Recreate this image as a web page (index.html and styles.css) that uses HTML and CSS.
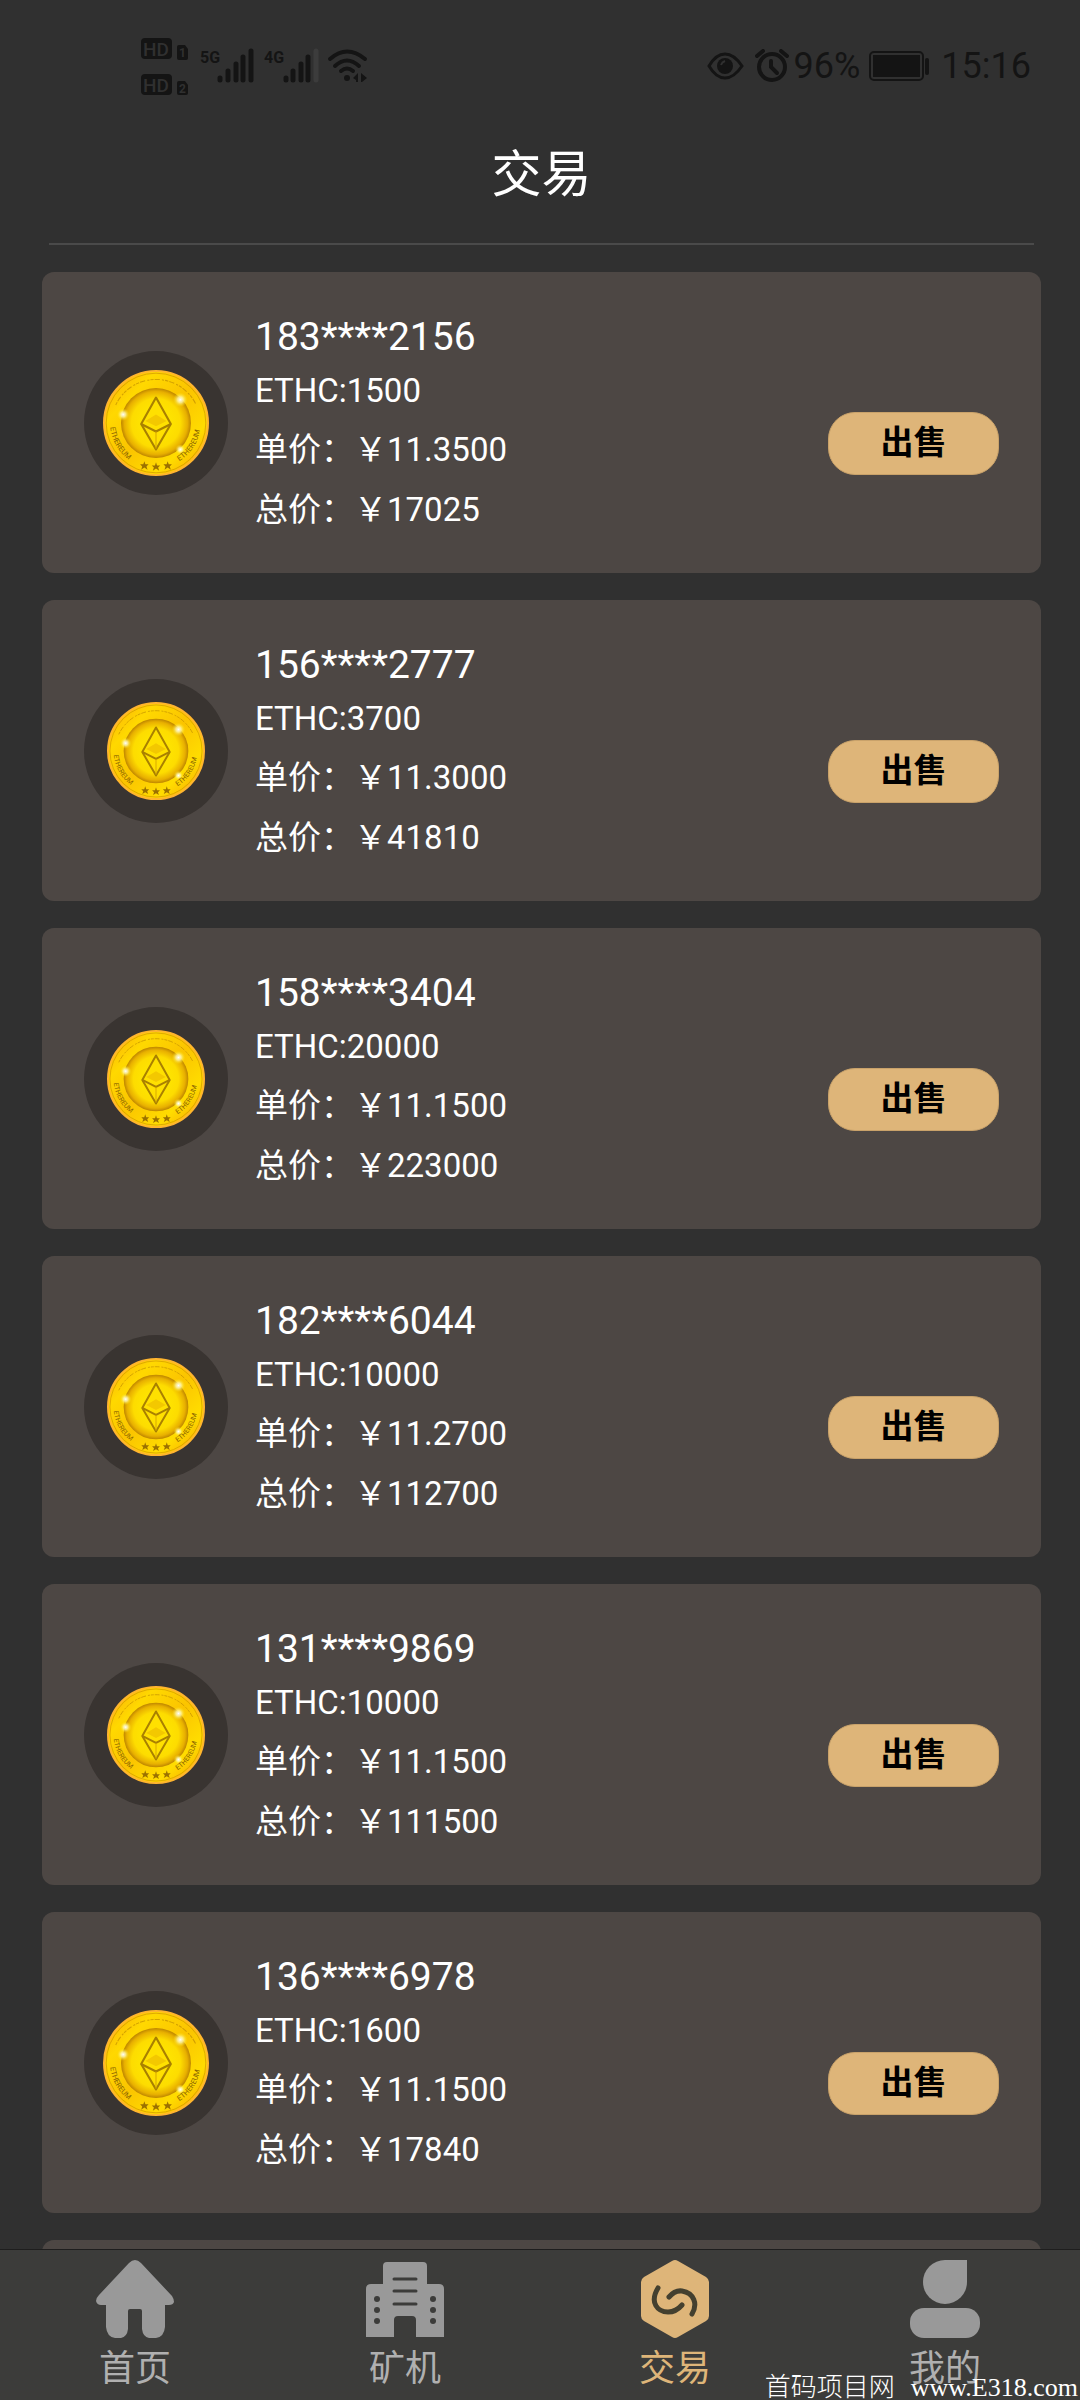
FILE: index.html
```
<!DOCTYPE html>
<html lang="zh-CN">
<head>
  <meta charset="UTF-8" />
  <meta name="viewport" content="width=device-width, initial-scale=1.0" />
  <title>交易</title>
  <link rel="stylesheet" href="styles.css">
</head>
<body>
  <!-- Shared gradients and paths for the coins -->
  <svg class="defs" width="0" height="0" aria-hidden="true">
    <defs>
      <linearGradient id="rim" x1="0" y1="0" x2="1" y2="1">
        <stop offset="0" stop-color="#f9a80a" />
        <stop offset="0.25" stop-color="#ffd800" />
        <stop offset="0.5" stop-color="#fbc400" />
        <stop offset="0.75" stop-color="#ffdc00" />
        <stop offset="1" stop-color="#f59c00" />
      </linearGradient>
      <radialGradient id="face" cx="0.5" cy="0.5" r="0.5">
        <stop offset="0" stop-color="#ffee00" />
        <stop offset="0.7" stop-color="#fddc00" />
        <stop offset="0.9" stop-color="#e8b000" />
        <stop offset="1" stop-color="#bd8500" />
      </radialGradient>
      <radialGradient id="glint">
        <stop offset="0" stop-color="#fff" />
        <stop offset="0.4" stop-color="#fff7a8" stop-opacity="0.8" />
        <stop offset="1" stop-color="#ffe400" stop-opacity="0" />
      </radialGradient>
      <path id="arc-left" d="M7 54A43 43 0 0 0 40 92" />
      <path id="arc-right" d="M72 86A43 43 0 0 0 92 46" />
      <path id="star" d="M50 88L51 91H54L52 93L53 96L50 94L47 96L48 93L46 91H49Z" />
    </defs>
  </svg>
  <template id="coin">
    <svg class="coin" viewBox="0 0 100 100" aria-hidden="true">
      <circle cx="50" cy="50" r="49" fill="url(#rim)" stroke="#ffb52e" stroke-width="2" />
      <circle cx="50" cy="50" r="47" fill="none" stroke="#c98b00" stroke-width="0.6" />
      <path d="M12 33A42 42 0 0 1 88 33" fill="none" stroke="#b58200" stroke-width="1" stroke-dasharray="3 1 5 2 2 1" opacity="0.6" />
      <circle cx="50" cy="50" r="33" fill="url(#face)" />
      <path d="M50 26L64 51L50 75L36 51Z" fill="#ffe000" stroke="#a98000" stroke-width="2" stroke-linejoin="round" />
      <path d="M50 42L60 48L50 53L40 48Z" fill="#f3c800" />
      <path d="M36 51L50 58L64 51" fill="none" stroke="#a98000" stroke-width="2" />
      <path d="M50 58V74" stroke="#d9a900" stroke-width="1" />
      <circle cx="19" cy="42" r="6" fill="url(#glint)" />
      <circle cx="73" cy="28" r="7" fill="url(#glint)" />
      <circle cx="73" cy="75" r="5" fill="url(#glint)" />
      <text class="coin-text"><textPath href="#arc-left">ETHEREUM</textPath></text>
      <text class="coin-text"><textPath href="#arc-right">ETHEREUM</textPath></text>
      <g fill="#9b7100">
        <use href="#star" y="-1" />
        <use href="#star" x="-11" y="-2" />
        <use href="#star" x="11" y="-2" />
      </g>
    </svg>
  </template>

  <div class="status">
    <svg width="232" height="60" viewBox="138 35 232 60" fill="#141414" aria-hidden="true">
      <rect x="141" y="37" width="31" height="21" rx="4" />
      <rect x="141" y="73" width="31" height="21" rx="4" />
      <text class="hd" x="143" y="55">HD</text>
      <text class="hd" x="143" y="91">HD</text>
      <path d="M179 44H185L188 48V57Q188 59 186 59H179Q177 59 177 57V46Q177 44 179 44Z" />
      <path d="M179 80H185L188 84V92Q188 94 186 94H179Q177 94 177 92V82Q177 80 179 80Z" />
      <text class="sim" x="179" y="56">1</text>
      <text class="sim" x="179" y="92">2</text>
      <text class="net" x="200" y="62">5G</text>
      <text class="net" x="264" y="62">4G</text>
      <g stroke="#141414" stroke-width="5" stroke-linecap="round">
        <path d="M220 77V79M228 70V79M236 63V79M243 56V79M251 50V79" />
        <path d="M286 77V79M293 70V79M301 63V79M308 56V79" />
        <path d="M316 50V79" stroke="#3c3c3c" />
      </g>
      <g fill="none" stroke="#141414" stroke-width="4" stroke-linecap="round">
        <path d="M330 58Q347 43 365 58M335 65Q347 54 359 65M341 70Q347 65 353 70" />
      </g>
      <circle cx="347" cy="77" r="3" />
      <path d="M358 72V81H356V79L353 77L358 72M361 72L367 77L362 81H361Z" />
    </svg>
    <div class="status-right">
      <svg width="37" height="28" viewBox="0 0 37 28" aria-hidden="true">
        <path d="M2 14Q9 2 18 2T35 14Q27 26 18 26T2 14Z" fill="none" stroke="#141414" stroke-width="3" />
        <circle cx="18" cy="14" r="8" fill="#141414" />
        <path d="M14 13Q15 10 18 9" fill="none" stroke="#303030" stroke-width="2" />
      </svg>
      <svg class="alarm" width="34" height="34" viewBox="0 0 34 34" fill="none" stroke="#141414" stroke-linecap="round" aria-hidden="true">
        <circle cx="17" cy="18" r="13" stroke-width="4" />
        <path d="M2 7L8 2M32 7L26 2" stroke-width="4" />
        <path d="M16 12V18L22 24" stroke-width="4" />
      </svg>
      <span>96%</span>
      <svg class="battery" width="61" height="30" viewBox="0 0 61 30" aria-hidden="true">
        <rect x="1" y="1" width="53" height="28" rx="4" fill="none" stroke="#141414" stroke-width="2" />
        <rect x="4" y="4" width="47" height="22" fill="#141414" />
        <rect x="56" y="7" width="4" height="17" rx="2" fill="#141414" />
      </svg>
      <span>15:16</span>
    </div>
  </div>

  <header>
    <h1>交易</h1>
  </header>

  <main>
    <ul class="orders" id="orders">
      <!-- Order cards will be populated here by JS -->
    </ul>
  </main>

  <nav>
    <a href="#home">
      <svg width="78" height="78" viewBox="0 0 78 78" fill="#999" aria-hidden="true">
        <path d="M33 3Q39 -3 45 3L76 36Q78 39 78 42Q77 45 73 45H69V67Q68 77 60 78H53Q47 77 46 69V51Q46 49 44 49H34Q32 49 32 51V69Q31 77 25 78H19Q11 77 10 67V45H5Q1 45 0 41Q0 38 3 35Z" />
      </svg>
      首页
    </a>
    <a href="#miner">
      <svg width="78" height="78" viewBox="0 0 78 78" aria-hidden="true">
        <path d="M21 2H57Q61 2 61 6V24H73Q78 24 78 29V77H50V60Q50 56 46 56H32Q28 56 28 60V77H0V29Q0 24 5 24H17V6Q17 2 21 2Z" fill="#999" />
        <path d="M28 19H50M28 31H50M28 44H50" stroke="#3c3c3a" stroke-width="3" stroke-linecap="round" />
        <g fill="#3c3c3a">
          <circle cx="11" cy="39" r="3" />
          <circle cx="11" cy="50" r="3" />
          <circle cx="11" cy="61" r="3" />
          <circle cx="67" cy="39" r="3" />
          <circle cx="67" cy="50" r="3" />
          <circle cx="67" cy="61" r="3" />
        </g>
      </svg>
      矿机
    </a>
    <a class="active" href="#trade">
      <svg width="78" height="78" viewBox="0 0 78 78" aria-hidden="true">
        <path d="M36 1Q39 -1 42 1L70 17Q73 19 73 22V56Q73 59 70 61L42 77Q39 79 36 77L8 61Q5 59 5 56V22Q5 19 8 17Z" fill="#deb579" />
        <path d="M22 28C13 43 22 52 32 52Q40 52 46 45M33 37Q39 30 46 31C58 33 62 44 56 54" fill="none" stroke="#44402f" stroke-width="5" stroke-linecap="round" />
      </svg>
      交易
    </a>
    <a href="#mine">
      <svg width="78" height="78" viewBox="0 0 78 78" fill="#999" aria-hidden="true">
        <path d="M39 0H61V22A22 22 0 1 1 39 0Z" />
        <rect x="4" y="48" width="70" height="30" rx="14" />
      </svg>
      我的
    </a>
  </nav>

  <div class="watermark"><span>首码项目网</span><span>www.E318.com</span></div>

  <script>
    const orders = [
      { user: '183****2156', amount: 1500, price: '11.3500', total: 17025, large: true },
      { user: '156****2777', amount: 3700, price: '11.3000', total: 41810 },
      { user: '158****3404', amount: 20000, price: '11.1500', total: 223000 },
      { user: '182****6044', amount: 10000, price: '11.2700', total: 112700 },
      { user: '131****9869', amount: 10000, price: '11.1500', total: 111500 },
      { user: '136****6978', amount: 1600, price: '11.1500', total: 17840, large: true }
    ];
    const coin = document.getElementById('coin').innerHTML;

    // Build one card per order.
    function buildCards(items) {
      let html = '';
      items.forEach(item => {
        html += `<li class="card">
                   <div class="coin-wrap ${item.large ? 'large' : ''}">${coin}</div>
                   <div class="info">
                     <h2>${item.user}</h2>
                     <p class="amount">ETHC:${item.amount}</p>
                     <p>单价：￥${item.price}</p>
                     <p>总价：￥${item.total}</p>
                   </div>
                   <button class="sell-btn" type="button">出售</button>
                 </li>`;
      });
      return html + '<li class="card"></li>';
    }

    document.getElementById('orders').innerHTML = buildCards(orders);
  </script>
</body>
</html>
```
FILE: styles.css
```
/* Global Styles */
* {
  box-sizing: border-box;
}
body {
  display: flex;
  flex-direction: column;
  height: 100vh;
  margin: 0;
  overflow: hidden;
  background-color: #303030;
  color: #fff;
  font-family: Roboto, "Noto Sans CJK SC", sans-serif;
}
h1, h2, p, ul {
  margin: 0;
  padding: 0;
  font-weight: 400;
}
svg {
  display: block;
  flex-shrink: 0;
}
.defs {
  position: absolute;
}

/* Status bar */
.status {
  display: flex;
  flex-shrink: 0;
  justify-content: space-between;
  align-items: center;
  height: 131px;
  padding: 0 49px 0 138px;
  color: #141414;
}
.status-right {
  display: flex;
  align-items: center;
  font-size: 36px;
}
.alarm {
  margin: 0 5px 0 11px;
}
.battery {
  margin: 0 11px 0 9px;
}
.hd {
  fill: #303030;
  font-size: 19px;
  font-weight: 500;
}
.sim {
  fill: #303030;
  font-size: 12px;
  font-weight: 700;
}
.net {
  font-size: 16px;
  font-weight: 700;
}

/* Title */
header {
  flex-shrink: 0;
  margin: 0 46px 0 49px;
  padding-bottom: 24px;
  border-bottom: 2px solid #4a4a4a;
  text-align: center;
}
header h1 {
  font-size: 50px;
  line-height: 88px;
}

/* Order list */
main {
  flex: 1;
  min-height: 0;
  overflow: hidden;
  padding: 27px 39px 0 42px;
}
.orders {
  display: flex;
  flex-direction: column;
  gap: 27px;
  list-style: none;
}
.card {
  display: flex;
  align-items: flex-start;
  min-height: 301px;
  padding: 38px 42px 33px;
  border-radius: 12px;
  background-color: #4d4744;
}
.coin-wrap {
  display: flex;
  justify-content: center;
  align-items: center;
  width: 144px;
  height: 144px;
  margin-top: 41px;
  margin-right: 27px;
  border-radius: 50%;
  background-color: #393431;
}
.coin {
  width: 98px;
  height: 98px;
}
.large .coin {
  width: 106px;
  height: 106px;
}
.coin-text {
  fill: #8a6400;
  font-size: 7px;
}
.info {
  flex: 1;
}
.info h2 {
  font-size: 39px;
  line-height: 54px;
}
.info p {
  font-size: 33px;
  line-height: 60px;
}
.info .amount {
  margin-bottom: 2px;
  line-height: 54px;
}
.sell-btn {
  align-self: flex-end;
  width: 171px;
  height: 63px;
  margin-bottom: 65px;
  padding: 0 0 8px;
  border: 1px solid #c9a26a;
  border-radius: 27px;
  background-color: #deb579;
  color: #000;
  font-family: inherit;
  font-size: 33px;
  font-weight: 700;
}

/* Bottom tabs */
nav {
  display: flex;
  flex-shrink: 0;
  height: 151px;
  padding-top: 10px;
  border-top: 1px solid #1e1e1e;
  background-color: #3c3c3a;
}
nav a {
  display: flex;
  flex: 1;
  flex-direction: column;
  align-items: center;
  color: #b0b0b0;
  font-size: 36px;
  line-height: 62px;
  text-decoration: none;
}
nav .active {
  color: #deb579;
}

.watermark {
  display: flex;
  gap: 16px;
  position: absolute;
  right: 2px;
  bottom: 0;
  color: #fff;
  font-family: "Liberation Serif", "Noto Sans CJK SC", serif;
  font-size: 26px;
  font-weight: 300;
  line-height: 24px;
}
```
